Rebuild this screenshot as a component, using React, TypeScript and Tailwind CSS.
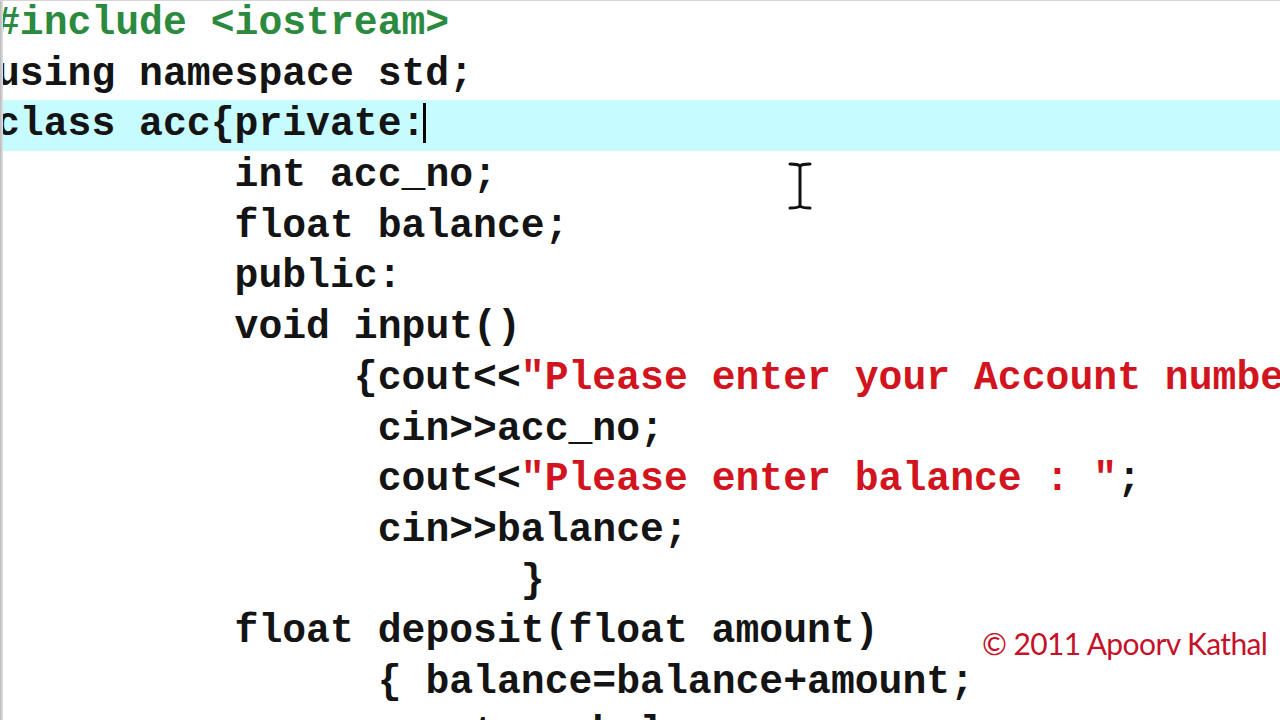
const GREEN = 'text-[#2b8a3e]'
const RED = 'text-[#d2141e]'

type Seg = { t: string; c?: string }
type Line = { indent: number; segs: Seg[]; active?: boolean; caret?: boolean }

const lines: Line[] = [
  { indent: 0, segs: [{ t: '#include <iostream>', c: GREEN }] },
  { indent: 0, segs: [{ t: 'using namespace std;' }] },
  { indent: 0, segs: [{ t: 'class acc{private:' }], active: true, caret: true },
  { indent: 10, segs: [{ t: 'int acc_no;' }] },
  { indent: 10, segs: [{ t: 'float balance;' }] },
  { indent: 10, segs: [{ t: 'public:' }] },
  { indent: 10, segs: [{ t: 'void input()' }] },
  {
    indent: 15,
    segs: [
      { t: '{cout<<' },
      { t: '"Please enter your Account number : "', c: RED },
      { t: ';' },
    ],
  },
  { indent: 16, segs: [{ t: 'cin>>acc_no;' }] },
  {
    indent: 16,
    segs: [
      { t: 'cout<<' },
      { t: '"Please enter balance : "', c: RED },
      { t: ';' },
    ],
  },
  { indent: 16, segs: [{ t: 'cin>>balance;' }] },
  { indent: 22, segs: [{ t: '}' }] },
  { indent: 10, segs: [{ t: 'float deposit(float amount)' }] },
  { indent: 16, segs: [{ t: '{ balance=balance+amount;' }] },
  { indent: 18, segs: [{ t: 'return balance;' }] },
]

// mouse text cursor
const IBeam = () => (
  <svg width="26" height="52" viewBox="0 0 26 52" fill="none">
    <g stroke="#111" strokeWidth="3" strokeLinecap="round">
      <path d="M13 6v40" />
      <path d="M3 4c4 0 8 0 10 2c2-2 6-2 10-2" />
      <path d="M3 48c4 0 8 0 10-2c2 2 6 2 10 2" />
    </g>
  </svg>
)

export default function App() {
  return (
    <div className="relative flex h-[720px] w-[1280px] overflow-hidden border-t border-[#d6d6d6] bg-white">
      <div className="w-[3px] shrink-0 bg-gradient-to-r from-[#b8b8b8] to-[#e4e4e4]" />
      <div className="flex-1 overflow-hidden">
        <div className="-mt-[2px] ml-[-7px] font-['Liberation_Mono',monospace] text-[39.75px] font-bold leading-[50.7px] text-[#141414]">
          {lines.map((l, i) => (
            <div
              key={i}
              className={`h-[50.7px] whitespace-pre ${l.active ? 'bg-[#c6fbff]' : ''}`}
            >
              {' '.repeat(l.indent)}
              {l.segs.map((s, j) => (
                <span key={j} className={s.c}>
                  {s.t}
                </span>
              ))}
              {l.caret && (
                <span className="ml-[-2px] inline-block h-[40px] w-[3px] bg-black align-[-8px]" />
              )}
            </div>
          ))}
        </div>
      </div>

      <div className="absolute left-[787px] top-[159px]">
        <IBeam />
      </div>

      <div className="absolute left-[982px] top-[620px] font-['Lato',sans-serif] text-[30px] tracking-[-0.6px] text-[#c4122a]">
        © 2011 Apoorv Kathal
      </div>
    </div>
  )
}
